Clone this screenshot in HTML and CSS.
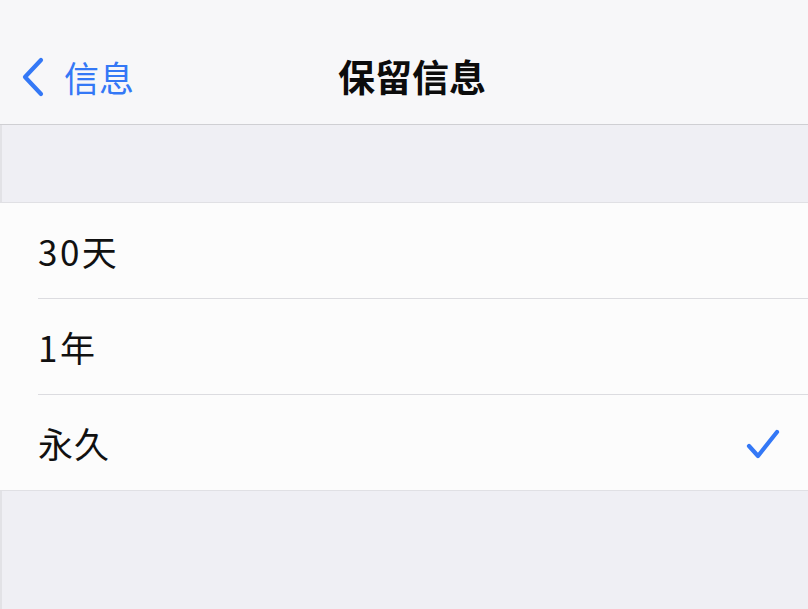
FILE: index.html
```html
<!DOCTYPE html>
<html lang="zh-CN">
<head>
    <meta charset="UTF-8">
    <meta name="viewport" content="width=device-width, initial-scale=1.0">
    <title>保留信息</title>
    <link rel="stylesheet" href="styles.css">
</head>
<body>
    <!-- 导航栏 -->
    <nav class="navbar">
        <a href="#" class="back-link">
            <svg class="back-icon" width="24" height="40" viewBox="0 0 24 40">
                <path d="M20 3 L4 20 L20 37" fill="none" stroke="#3478f6" stroke-width="4.2" stroke-linecap="round" stroke-linejoin="round"/>
            </svg>
            <span>信息</span>
        </a>
        <h1 class="nav-title">保留信息</h1>
    </nav>

    <div class="spacer"></div>

    <!-- 选项列表 -->
    <ul class="option-list">
        <li class="option-item"><span class="option-label digits">30天</span></li>
        <li class="option-item"><span class="option-label digits">1年</span></li>
        <li class="option-item selected">
            <span class="option-label">永久</span>
            <svg class="check-icon" width="34" height="32" viewBox="0 0 34 32">
                <path d="M3 18 L12 28 L31 4" fill="none" stroke="#3478f6" stroke-width="4.2" stroke-linecap="round" stroke-linejoin="round"/>
            </svg>
        </li>
    </ul>
</body>
</html>
```

FILE: styles.css
```css
/* 기본 */
body {
    margin: 0;
    height: 609px;
    background-color: #efeff4;
    font-family: "Noto Sans CJK SC", "Noto Sans", sans-serif;
    color: #111;
    box-shadow: inset 2px 0 0 #e2e2e6;
    overflow: hidden;
}

/* 导航栏 */
.navbar {
    position: relative;
    height: 125px;
    box-sizing: border-box;
    padding-top: 28px;
    background-color: #f7f7f9;
    border-bottom: 1px solid #cfcfd3;
    display: flex;
    align-items: center;
    justify-content: center;
}

.back-link {
    position: absolute;
    left: 21px;
    top: 28px;
    bottom: 0;
    display: flex;
    align-items: center;
    gap: 19px;
    color: #3478f6;
    text-decoration: none;
    font-size: 35px;
}

.back-icon {
    margin-top: 2px;
}

.nav-title {
    margin: 0 0 0 16px;
    font-size: 37px;
    font-weight: 700;
    color: #0c0c0c;
}

.spacer {
    height: 77px;
}

/* 选项列表 */
.option-list {
    list-style: none;
    margin: 0;
    padding: 0 0 0 38px;
    background-color: #fcfcfc;
    border-top: 1px solid #e0e0e4;
    border-bottom: 1px solid #e0e0e4;
}

.option-item {
    height: 95px;
    display: flex;
    align-items: center;
    justify-content: space-between;
    padding-right: 28px;
    border-bottom: 1px solid #dcdce0;
    font-size: 35px;
}

.option-item:last-child {
    border-bottom: none;
}

.option-label {
    letter-spacing: 1px;
}

.option-label.digits {
    letter-spacing: 2.5px;
}

.check-icon {
    margin-top: 2px;
}
```
